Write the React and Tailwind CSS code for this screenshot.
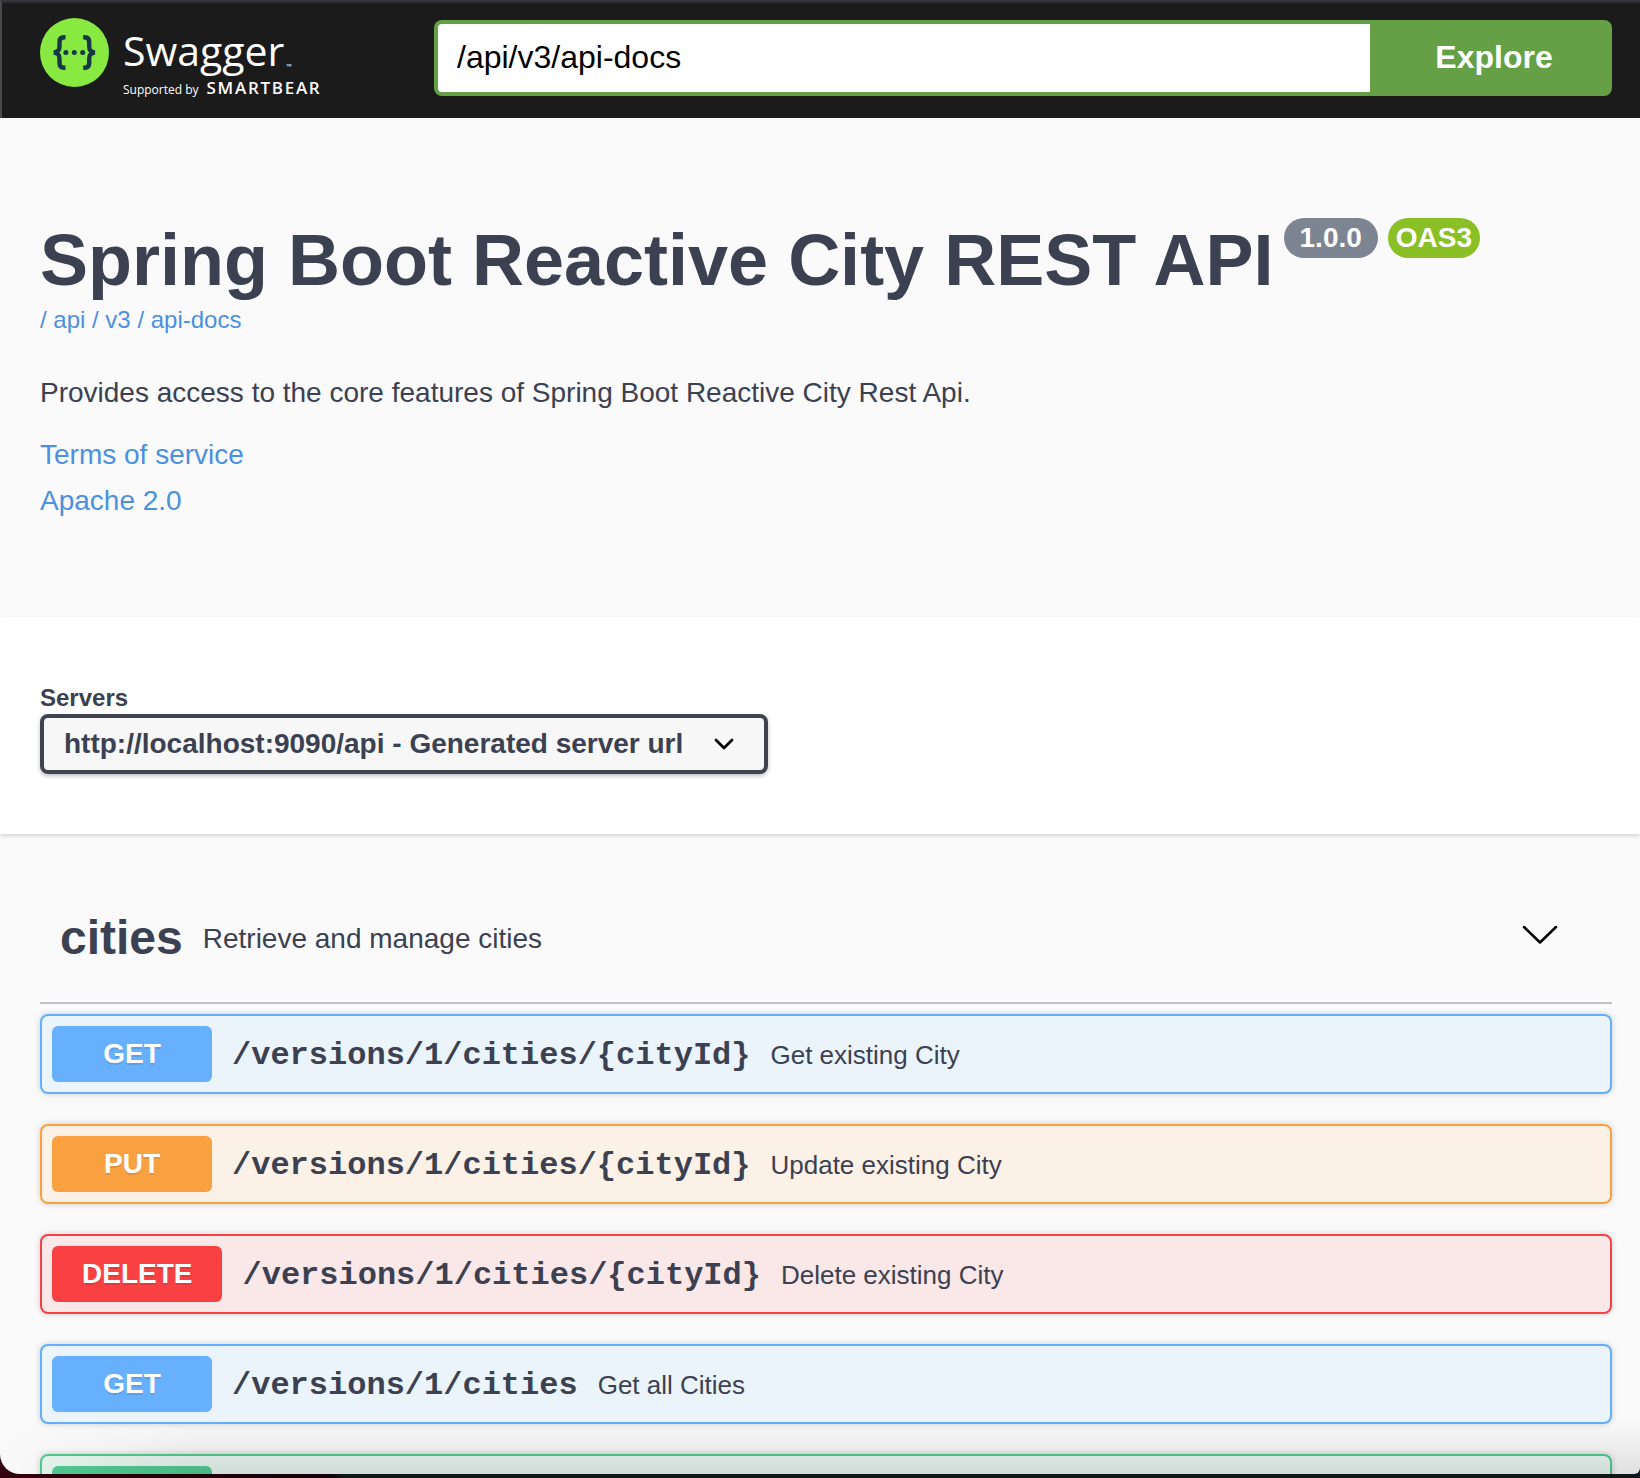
import React from "react";

const METHOD_STYLES = {
  GET: {
    row: "border-[#64affb] bg-[#ebf3fb]",
    badge: "bg-[#66b0fe]",
  },
  PUT: {
    row: "border-[#f8a13f] bg-[#fbf1e6]",
    badge: "bg-[#f9a140]",
  },
  DELETE: {
    row: "border-[#f74145] bg-[#fae7e7]",
    badge: "bg-[#f94144]",
  },
  POST: {
    row: "border-[#50cb91] bg-[#e8f6f0]",
    badge: "bg-[#52cb92]",
  },
};

const OPERATIONS = [
  { method: "GET", path: "/versions/1/cities/{cityId}", summary: "Get existing City" },
  { method: "PUT", path: "/versions/1/cities/{cityId}", summary: "Update existing City" },
  { method: "DELETE", path: "/versions/1/cities/{cityId}", summary: "Delete existing City" },
  { method: "GET", path: "/versions/1/cities", summary: "Get all Cities" },
];

function Logo() {
  return (
    <a href="#" aria-label="Swagger, supported by SmartBear" className="-mt-0.5 flex w-[394px] shrink-0 items-start gap-[14px] text-white">
      <svg viewBox="0 0 69 69" className="size-[69px] shrink-0" aria-hidden="true">
        <circle cx="34.5" cy="34.5" r="34.5" fill="#88e940" />
        <g fill="none" stroke="#173647" strokeWidth="4.400">
          <path d="M25.500 19.200H24c-3.200 0-4.500 1.700-4.500 4.700v4.500c0 3.600-1.300 5.300-5.500 6.100 4.200.8 5.500 2.500 5.500 6.100v4.500c0 3 1.300 4.700 4.500 4.700h1.500" />
          <path d="M43.200 19.200h1.500c3.200 0 4.500 1.700 4.500 4.700v4.500c0 3.600 1.300 5.300 5.500 6.100-4.200.8-5.500 2.500-5.500 6.100v4.500c0 3-1.300 4.700-4.500 4.700h-1.500" />
        </g>
        <g fill="#173647">
          <circle cx="25.900" cy="34.500" r="2.500" />
          <circle cx="34.300" cy="34.500" r="2.500" />
          <circle cx="42.700" cy="34.500" r="2.500" />
        </g>
      </svg>
      <span className="flex flex-col font-['Open_Sans',sans-serif]">
        <span className="flex h-[60px] items-end gap-0.5">
          <span className="text-[41px] leading-[56px]">Swagger</span>
          <span className="text-[7px] leading-[22px]">™</span>
        </span>
        <span className="flex items-baseline gap-2 leading-5">
          <span className="text-[12px]">Supported by</span>
          <span className="text-[17px] font-semibold tracking-widest">SMARTBEAR</span>
        </span>
      </span>
    </a>
  );
}

function TopBar() {
  return (
    <header className="flex items-start border-t-2 border-l-2 border-t-[#35353b] border-l-[#4a4a4a] bg-[#1b1b1b]">
      <div className="flex w-full items-start border-t-2 border-[#242427] pt-4 pr-7 pb-[22px] pl-[38px]">
        <div className="flex h-[76px] shrink-0 items-start">
          <Logo />
        </div>
        <form className="flex min-w-0 flex-1" onSubmit={(e) => e.preventDefault()}>
          <input
            type="text"
            aria-label="API definition URL"
            defaultValue="/api/v3/api-docs"
            className="h-[76px] min-w-0 flex-1 rounded-l-lg border-4 border-r-0 border-[#65a046] bg-white px-[19px] pb-0.5 text-[32px] text-black outline-none"
          />
          <button type="submit" className="h-[76px] w-[242px] rounded-r-lg bg-[#65a046] pb-0.5 pl-1.5 text-[32px] font-bold text-white">
            Explore
          </button>
        </form>
      </div>
    </header>
  );
}

function Info() {
  return (
    <section className="px-10 pt-[100px] pb-[93px]">
      <div className="flex items-start gap-2.5">
        <h1 className="text-[72px] leading-[84px] font-bold">Spring Boot Reactive City REST API</h1>
        <div className="flex gap-2.5 text-[28px] leading-10 font-bold text-white">
          <span className="rounded-full bg-[#7d8492] px-4">1.0.0</span>
          <span className="rounded-full bg-[#8bbf26] px-2">OAS3</span>
        </div>
      </div>
      <a href="#docs" className="block text-2xl leading-9 text-[#4c90e0]">/ api / v3 / api-docs</a>
      <p className="mt-[35px] text-[28px] leading-10">
        Provides access to the core features of Spring Boot Reactive City Rest Api.
      </p>
      <div className="mt-[19px] flex flex-col items-start text-[28px] leading-[46px] text-[#4c90e0]">
        <a href="#terms">Terms of service</a>
        <a href="#license">Apache 2.0</a>
      </div>
    </section>
  );
}

function Servers() {
  return (
    <section className="bg-white px-10 pt-[65px] pb-[60px] shadow-[0_2px_4px_rgba(0,0,0,0.15)]">
      <label htmlFor="server" className="block text-2xl leading-8 font-bold">Servers</label>
      <div className="relative inline-flex">
        <select
          id="server"
          className="h-[60px] appearance-none rounded-lg border-4 border-[#41444e] bg-[#f7f7f7] pr-[80px] pl-5 text-[28px] font-bold shadow-[0_2px_4px_rgba(0,0,0,0.25)] outline-none"
        >
          <option>http://localhost:9090/api - Generated server url</option>
        </select>
        <svg viewBox="0 0 20 12" className="pointer-events-none absolute top-6 right-[34px] h-3 w-5" aria-hidden="true">
          <path d="M2 2l8 8 8-8" fill="none" stroke="#000" strokeWidth="2.800" strokeLinecap="round" strokeLinejoin="round" />
        </svg>
      </div>
    </section>
  );
}

function OperationRow({ method, children, ...props }) {
  return (
    <button
      type="button"
      className={`flex h-20 w-full shrink-0 items-center gap-5 rounded-lg border-2 px-2.5 text-left shadow-[0_0_6px_rgba(0,0,0,0.19)] ${METHOD_STYLES[method].row}`}
      {...props}
    >
      {children}
    </button>
  );
}

function Operation({ method, path, summary }) {
  return (
    <OperationRow method={method}>
      <span
        className={`min-w-40 rounded-md px-[30px] text-center text-[28px] leading-[56px] font-bold text-white [text-shadow:0_2px_0_rgba(0,0,0,0.1)] ${METHOD_STYLES[method].badge}`}
      >
        {method}
      </span>
      <span className="pt-1 font-['Liberation_Mono',monospace] text-[32px] font-bold">{path}</span>
      <span className="pt-0.5 text-[26px]">{summary}</span>
    </OperationRow>
  );
}

function Tag() {
  return (
    <section className="pt-10 pr-7 pl-10">
      <button type="button" className="flex w-full items-center gap-5 border-b-2 border-[#c0c1c6] py-9 pr-[54px] pl-5 text-left">
        <span className="text-5xl leading-[56px] font-bold">cities</span>
        <span className="flex-1 pt-0.5 text-[28px]">Retrieve and manage cities</span>
        <svg viewBox="0 0 36 20" className="mb-1.5 h-5 w-9" aria-hidden="true">
          <path d="m2 2 16 15.500L34 2" fill="none" stroke="#000" strokeWidth="2.500" strokeLinecap="round" strokeLinejoin="round" />
        </svg>
      </button>
      <div className="mt-2.5 flex flex-col gap-[30px]">
        {OPERATIONS.map((op) => (
          <Operation key={op.method + op.path} {...op} />
        ))}
        <OperationRow method="POST" aria-label="POST">
          <span className={`h-14 w-40 rounded-md ${METHOD_STYLES.POST.badge}`} />
        </OperationRow>
      </div>
    </section>
  );
}

export default function App() {
  return (
    <div className="flex h-screen flex-col bg-linear-to-r from-[#33000f] from-0% via-[#12000a] via-20% to-[#10151a] to-21% pb-1 font-['Liberation_Sans',Arial,sans-serif] text-[#3b4151]">
      <main className="relative min-h-0 flex-1 overflow-hidden rounded-br-md rounded-bl-[20px] bg-[#fafafa]">
        <TopBar />
        <Info />
        <Servers />
        <Tag />
        <div className="pointer-events-none absolute inset-x-0 bottom-0 h-14 bg-linear-to-t from-black/10 to-transparent [mask-image:linear-gradient(to_right,transparent,black_200px)]" />
      </main>
    </div>
  );
}
